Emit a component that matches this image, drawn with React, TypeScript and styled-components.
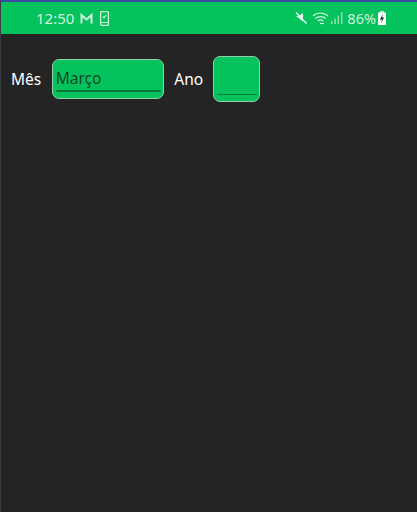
import { createGlobalStyle } from 'styled-components';
import styled from 'styled-components';

const GlobalStyle = createGlobalStyle`
    html, body {
        margin: 0;
        padding: 0;
        background: #242424;
    }
`;

const Screen = styled.div`
    width: 417px;
    height: 512px;
    box-sizing: border-box;
    background: #242424;
    border-left: 1px solid #3b3b45;
    border-top: 2px solid #3a48a0;
    overflow: hidden;
    font-family: "Noto Sans", "Open Sans", sans-serif;
`;

const StatusBar = styled.div`
    height: 32px;
    background: #04c35c;
    display: flex;
    align-items: center;
    justify-content: space-between;
    padding: 0 31px 0 35px;
    color: #d0f2de;
    font-size: 14px;
`;

const StatusGroup = styled.div`
    display: flex;
    align-items: center;
`;

const Clock = styled.span`
    font-size: 15px;
    margin-right: 6px;
`;

const Battery = styled.span`
    font-size: 14.5px;
    margin: 0 2px 0 4px;
`;

const FormRow = styled.div`
    display: flex;
    align-items: center;
    padding: 22px 0 0 10px;
`;

const Label = styled.label<{ $gap: number }>`
    color: #ffffff;
    font-size: 15.5px;
    margin-right: ${props => props.$gap}px;
`;

const Field = styled.div<{ $width: number, $height: number, $gap: number }>`
    width: ${props => props.$width}px;
    height: ${props => props.$height}px;
    margin-right: ${props => props.$gap}px;
    box-sizing: border-box;
    background: #04c35c;
    border: 1px solid #8fcfa9;
    border-radius: 7px;
    padding: 0 2px 6px 3px;
    display: flex;
    align-items: flex-end;
`;

const Value = styled.div<{ $line: number }>`
    width: 100%;
    height: 24px;
    line-height: 21px;
    box-sizing: border-box;
    border-bottom: ${props => props.$line}px solid #0a7a3c;
    color: #064a26;
    font-size: 15.5px;
`;

const App = () => {
    return (
        <Screen>
            <GlobalStyle />
            <StatusBar>
                <StatusGroup>
                    <Clock>12:50</Clock>
                    <svg width="13" height="11" viewBox="0 0 13 11" fill="none" stroke="#d0f2de" strokeWidth="2">
                        <path d="M1.500 10.500V2l5 4.500 5-4.500v8.500" />
                    </svg>
                    <svg width="9" height="15" viewBox="0 0 9 15" fill="none" stroke="#d0f2de" strokeWidth="1.200" style={{ marginLeft: 7 }}>
                        <rect x="0.600" y="0.600" width="7.800" height="13.800" rx="1" />
                        <path d="M0.600 11.500h7.800M2.800 5.500l1.200 1.300L6.200 4" />
                    </svg>
                </StatusGroup>
                <StatusGroup>
                    <svg width="13" height="14" viewBox="0 0 13 14" fill="#e6f8ee">
                        <path d="M1 5h3l4-3v8.500L1 5z" />
                        <path d="M1 1.500l10.500 11" stroke="#e6f8ee" strokeWidth="1.500" />
                    </svg>
                    <svg width="17" height="14" viewBox="0 0 17 14" fill="none" stroke="#d0f2de" strokeWidth="1.200" style={{ marginLeft: 4 }}>
                        <path d="M1 5c4.200-4 10.800-4 15 0M3.200 7.500c2.800-2.500 7.800-2.500 10.600 0M5.700 10c1.600-1.300 4-1.300 5.600 0" />
                        <path d="M8 12.500h4" />
                    </svg>
                    <svg width="12" height="12" viewBox="0 0 12 12" fill="#8fdcb0" style={{ marginLeft: 2 }}>
                        <rect x="0" y="9" width="1.500" height="3" />
                        <rect x="3.300" y="6.500" width="1.500" height="5.500" />
                        <rect x="6.600" y="3.500" width="1.500" height="8.500" />
                        <rect x="10" y="0" width="1.500" height="12" />
                    </svg>
                    <Battery>86%</Battery>
                    <svg width="8" height="14" viewBox="0 0 8 14">
                        <rect x="2" y="0" width="4" height="2" fill="#b5ebcb" />
                        <rect x="0" y="1.500" width="8" height="12.500" fill="#f2fbf6" />
                        <path d="M5 3L2 8.500h2L3 12l3-5.500H4z" fill="#123" />
                    </svg>
                </StatusGroup>
            </StatusBar>
            <FormRow>
                <Label $gap={10.5}>Mês</Label>
                <Field $width={112} $height={40} $gap={10.5}>
                    <Value $line={2}>Março</Value>
                </Field>
                <Label $gap={10}>Ano</Label>
                <Field $width={47} $height={46} $gap={0}>
                    <Value $line={1} />
                </Field>
            </FormRow>
        </Screen>
    );
};

export default App;
